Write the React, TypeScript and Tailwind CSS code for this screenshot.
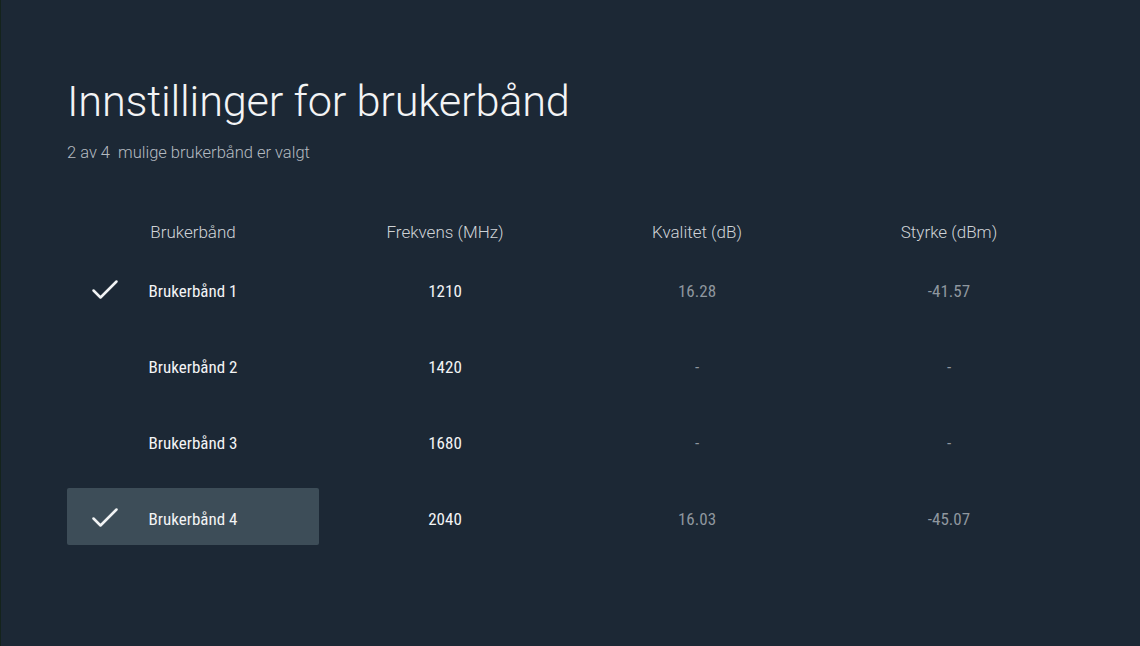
import React from 'react';

const rows = [
  { name: 'Brukerbånd 1', freq: '1210', quality: '16.28', strength: '-41.57', checked: true, focused: false },
  { name: 'Brukerbånd 2', freq: '1420', quality: '-', strength: '-', checked: false, focused: false },
  { name: 'Brukerbånd 3', freq: '1680', quality: '-', strength: '-', checked: false, focused: false },
  { name: 'Brukerbånd 4', freq: '2040', quality: '16.03', strength: '-45.07', checked: true, focused: true },
];

const condensed = { fontFamily: '"Roboto Condensed", "Liberation Sans Narrow", Roboto, sans-serif' };

const Check = () => (
  <svg width="28" height="22" viewBox="0 0 28 22" fill="none" className="absolute left-[24px] top-1/2 -translate-y-1/2 mt-[1px]">
    <path d="M2.5 11.5 L9.5 18.5 L25.5 2.5" stroke="#f1f3f4" strokeWidth="2.5" strokeLinecap="round" strokeLinejoin="round" />
  </svg>
);

export default function App() {
  return (
    <div
      className="w-[1140px] h-[646px] bg-[#1c2835] border-l border-[#14231c] pl-[66px] pt-[76px] overflow-hidden"
      style={{ fontFamily: 'Roboto, "Noto Sans", sans-serif' }}
    >
      <h1 className="text-[43.3px] leading-[52px] font-light text-[#f3f4f5] tracking-[-0.2px]">Innstillinger for brukerbånd</h1>
      <p className="mt-[14px] text-[16.5px] leading-[22px] font-light text-[#b4bac0]">2 av 4&nbsp; mulige brukerbånd er valgt</p>

      <div className="mt-[49px] w-[1008px]">
        <div className="grid grid-cols-4 h-[40px] items-center text-[17px] font-light text-[#cfd3d7]">
          <div className="text-center">Brukerbånd</div>
          <div className="text-center">Frekvens (MHz)</div>
          <div className="text-center">Kvalitet (dB)</div>
          <div className="text-center">Styrke (dBm)</div>
        </div>
        <div className="mt-[7px] flex flex-col gap-[19px]">
          {rows.map((r) => (
            <div key={r.name} className="grid grid-cols-4 h-[57px] items-stretch text-[17px]" style={condensed}>
              <div
                className={`relative flex items-center justify-center pt-[6px] rounded-[2px] text-[#f3f4f5] ${
                  r.focused ? 'bg-[#3d4d58]' : ''
                }`}
              >
                {r.checked && <Check />}
                <span>{r.name}</span>
              </div>
              <div className="flex items-center justify-center pt-[6px] text-[#f3f4f5]">{r.freq}</div>
              <div className="flex items-center justify-center pt-[6px] text-[#8f979f]">{r.quality}</div>
              <div className="flex items-center justify-center pt-[6px] text-[#8f979f]">{r.strength}</div>
            </div>
          ))}
        </div>
      </div>
    </div>
  );
}
